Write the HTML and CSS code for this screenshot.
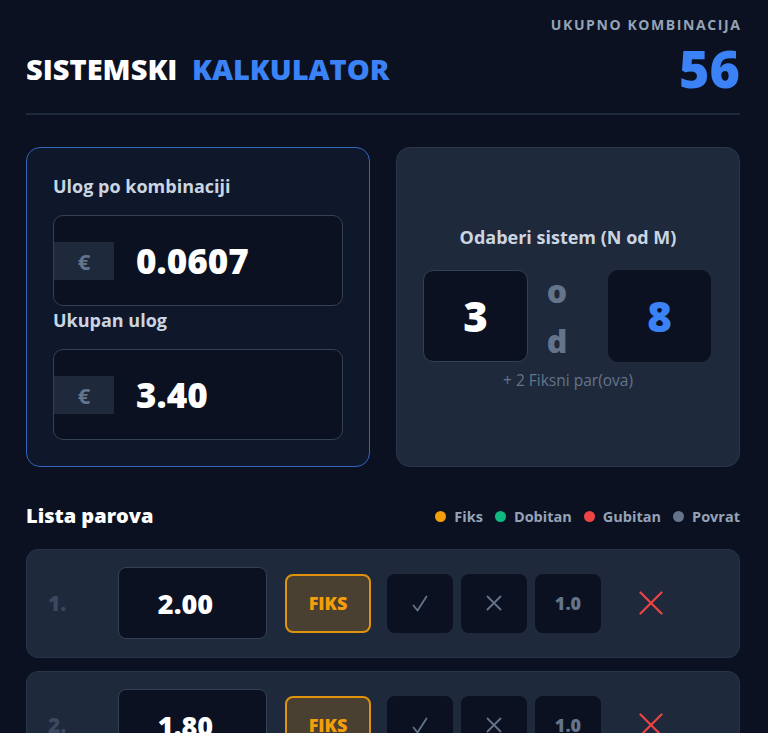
FILE: index.html
```html
<!DOCTYPE html>
<html lang="hr">
<head>
    <meta charset="UTF-8">
    <meta name="viewport" content="width=device-width, initial-scale=1.0">
    <title>Sistemski kalkulator</title>
    <link rel="stylesheet" href="styles.css">
</head>
<body>
    <main class="page">
        <header class="topBar">
            <h1 class="title">SISTEMSKI <span class="titleAccent">KALKULATOR</span></h1>
            <div class="totalBox">
                <p class="totalLabel">UKUPNO KOMBINACIJA</p>
                <p class="totalValue">56</p>
            </div>
        </header>

        <section class="topCards">
            <div class="stakeCard">
                <div class="fieldGroup">
                    <label class="fieldLabel">Ulog po kombinaciji</label>
                    <div class="moneyInput">
                        <span class="currency">€</span>
                        <span class="moneyValue">0.0607</span>
                    </div>
                </div>
                <div class="fieldGroup">
                    <label class="fieldLabel">Ukupan ulog</label>
                    <div class="moneyInput">
                        <span class="currency">€</span>
                        <span class="moneyValue">3.40</span>
                    </div>
                </div>
            </div>

            <div class="systemCard">
                <p class="systemTitle">Odaberi sistem (N od M)</p>
                <div class="pickRow">
                    <div class="pickBox">3</div>
                    <div class="pickMid"><span class="pickWord">od</span></div>
                    <div class="pickBox pickTotal">8</div>
                </div>
                <p class="systemNote">+ 2 Fiksni par(ova)</p>
            </div>
        </section>

        <section class="pairs">
            <div class="pairsHeader">
                <h2 class="pairsTitle">Lista parova</h2>
                <div class="legend">
                    <span class="legendItem"><i class="dot dotFiks"></i>Fiks</span>
                    <span class="legendItem"><i class="dot dotWin"></i>Dobitan</span>
                    <span class="legendItem"><i class="dot dotLose"></i>Gubitan</span>
                    <span class="legendItem"><i class="dot dotVoid"></i>Povrat</span>
                </div>
            </div>

            <div class="pairRow">
                <span class="pairNo">1.</span>
                <div class="oddsBox">2.00</div>
                <button class="fiksBtn">FIKS</button>
                <button class="markBtn">
                    <svg width="16" height="17" viewBox="0 0 16 17"><path d="M1.5 10.5 L5.5 15.5 L14.5 1.5" fill="none" stroke="#64748b" stroke-width="1.8" stroke-linecap="round" stroke-linejoin="round"/></svg>
                </button>
                <button class="markBtn">
                    <svg width="16" height="16" viewBox="0 0 16 16"><path d="M1.5 1.5 L14.5 14.5 M14.5 1.5 L1.5 14.5" fill="none" stroke="#64748b" stroke-width="1.8" stroke-linecap="round"/></svg>
                </button>
                <button class="markBtn markText">1.0</button>
                <button class="removeBtn">
                    <svg width="24" height="24" viewBox="0 0 24 24"><path d="M1.5 1.5 L22.5 22.5 M22.5 1.5 L1.5 22.5" fill="none" stroke="#ef4444" stroke-width="2.2" stroke-linecap="round"/></svg>
                </button>
            </div>

            <div class="pairRow">
                <span class="pairNo">2.</span>
                <div class="oddsBox">1.80</div>
                <button class="fiksBtn">FIKS</button>
                <button class="markBtn">
                    <svg width="16" height="17" viewBox="0 0 16 17"><path d="M1.5 10.5 L5.5 15.5 L14.5 1.5" fill="none" stroke="#64748b" stroke-width="1.8" stroke-linecap="round" stroke-linejoin="round"/></svg>
                </button>
                <button class="markBtn">
                    <svg width="16" height="16" viewBox="0 0 16 16"><path d="M1.5 1.5 L14.5 14.5 M14.5 1.5 L1.5 14.5" fill="none" stroke="#64748b" stroke-width="1.8" stroke-linecap="round"/></svg>
                </button>
                <button class="markBtn markText">1.0</button>
                <button class="removeBtn">
                    <svg width="24" height="24" viewBox="0 0 24 24"><path d="M1.5 1.5 L22.5 22.5 M22.5 1.5 L1.5 22.5" fill="none" stroke="#ef4444" stroke-width="2.2" stroke-linecap="round"/></svg>
                </button>
            </div>
        </section>
    </main>
</body>
</html>
```

FILE: styles.css
```css
body {
    margin: 0;
    background: #0b1120;
    color: #ffffff;
    font-family: "Open Sans", "Noto Sans", sans-serif;
}

.page {
    padding: 0 28px 0 26px;
}

p {
    margin: 0;
}

/* header */
.topBar {
    display: flex;
    justify-content: space-between;
    align-items: flex-end;
    padding: 15px 0 19px;
    border-bottom: 2px solid #1e293b;
}

.title {
    margin: 0 0 7px;
    font-size: 29px;
    line-height: 36px;
    font-weight: 800;
    color: #ffffff;
}

.titleAccent {
    margin-left: 7px;
    color: #3b82f6;
}

.totalBox {
    text-align: right;
}

.totalLabel {
    font-size: 14px;
    line-height: 20px;
    font-weight: 700;
    letter-spacing: 1.6px;
    color: #94a3b8;
    margin-bottom: 7px;
    margin-right: -1.6px;
}

.totalValue {
    font-size: 52px;
    line-height: 52px;
    font-weight: 800;
    color: #3b82f6;
}

/* top cards */
.topCards {
    display: grid;
    grid-template-columns: 1fr 1fr;
    gap: 26px;
    margin-top: 32px;
}

.stakeCard {
    background: #0f172a;
    border: 1px solid #3466c0;
    border-radius: 14px;
    padding: 26px;
}

.fieldGroup + .fieldGroup {
    margin-top: 2px;
}

.fieldLabel {
    display: block;
    font-size: 18px;
    line-height: 24px;
    font-weight: 700;
    color: #cbd5e1;
    margin-bottom: 17px;
}

.moneyInput {
    display: flex;
    align-items: center;
    height: 89px;
    background: #0b1120;
    border: 1px solid #334155;
    border-radius: 10px;
}

.currency {
    width: 60px;
    height: 38px;
    display: flex;
    align-items: center;
    justify-content: center;
    background: #1e293b;
    color: #64748b;
    font-size: 22px;
    font-weight: 700;
}

.moneyValue {
    margin-left: 22px;
    font-size: 35px;
    font-weight: 800;
}

.systemCard {
    background: #1e293b;
    border: 1px solid #2a374b;
    border-radius: 14px;
    padding: 26px;
    display: flex;
    flex-direction: column;
    align-items: center;
    justify-content: center;
}

.systemTitle {
    font-size: 18px;
    line-height: 24px;
    font-weight: 700;
    color: #cbd5e1;
    margin-bottom: 21px;
}

.pickRow {
    display: flex;
    align-items: center;
    align-self: stretch;
}

.pickBox {
    width: 105px;
    height: 92px;
    box-sizing: border-box;
    display: flex;
    align-items: center;
    justify-content: center;
    background: #0b1120;
    border: 1px solid #334155;
    border-radius: 10px;
    font-size: 42px;
    font-weight: 800;
}

.pickTotal {
    width: 103px;
    border-color: #0b1120;
    color: #3b82f6;
}

.pickMid {
    width: 80px;
    height: 92px;
    box-sizing: border-box;
    padding-right: 22px;
    display: flex;
    align-items: center;
    justify-content: center;
}

.pickWord {
    width: 22px;
    word-break: break-all;
    text-align: center;
    font-size: 32px;
    line-height: 50px;
    font-weight: 800;
    color: #64748b;
}

.systemNote {
    margin-top: 8px;
    font-size: 15.5px;
    line-height: 20px;
    color: #64748b;
}

/* pairs list */
.pairs {
    margin-top: 36px;
}

.pairsHeader {
    display: flex;
    justify-content: space-between;
    align-items: center;
    margin-bottom: 20px;
}

.pairsTitle {
    margin: 0;
    font-size: 20px;
    line-height: 26px;
    font-weight: 800;
}

.legend {
    display: flex;
    gap: 12px;
}

.legendItem {
    display: flex;
    align-items: center;
    gap: 8px;
    font-size: 14.5px;
    font-weight: 700;
    color: #94a3b8;
}

.dot {
    width: 11px;
    height: 11px;
    border-radius: 50%;
}

.dotFiks { background: #f59e0b; }
.dotWin { background: #10b981; }
.dotLose { background: #ef4444; }
.dotVoid { background: #64748b; }

.pairRow {
    display: flex;
    align-items: center;
    background: #1e293b;
    border: 1px solid #283548;
    border-radius: 12px;
    padding: 17px 21px 18px;
    margin-bottom: 13px;
}

.pairNo {
    width: 70px;
    font-size: 21px;
    font-weight: 800;
    color: #3b4860;
}

.oddsBox {
    width: 149px;
    height: 72px;
    box-sizing: border-box;
    display: flex;
    align-items: center;
    justify-content: center;
    padding-right: 14px;
    background: #0b1120;
    border: 1px solid #334155;
    border-radius: 8px;
    font-size: 27px;
    font-weight: 800;
    margin-right: 18px;
}

.pairRow button {
    font-family: inherit;
    cursor: pointer;
    padding: 0;
}

.fiksBtn {
    width: 86px;
    height: 59px;
    margin-right: 16px;
    background: rgba(245, 158, 11, 0.2);
    border: 2px solid #e0920c;
    border-radius: 8px;
    color: #f59e0b;
    font-size: 18px;
    font-weight: 800;
}

.markBtn {
    width: 66px;
    height: 59px;
    margin-right: 8px;
    display: flex;
    align-items: center;
    justify-content: center;
    background: #0b1120;
    border: none;
    border-radius: 8px;
    color: #64748b;
}

.markText {
    font-size: 18px;
    font-weight: 800;
}

.removeBtn {
    width: 40px;
    height: 40px;
    margin-left: 22px;
    display: flex;
    align-items: center;
    justify-content: center;
    background: none;
    border: none;
}
```
